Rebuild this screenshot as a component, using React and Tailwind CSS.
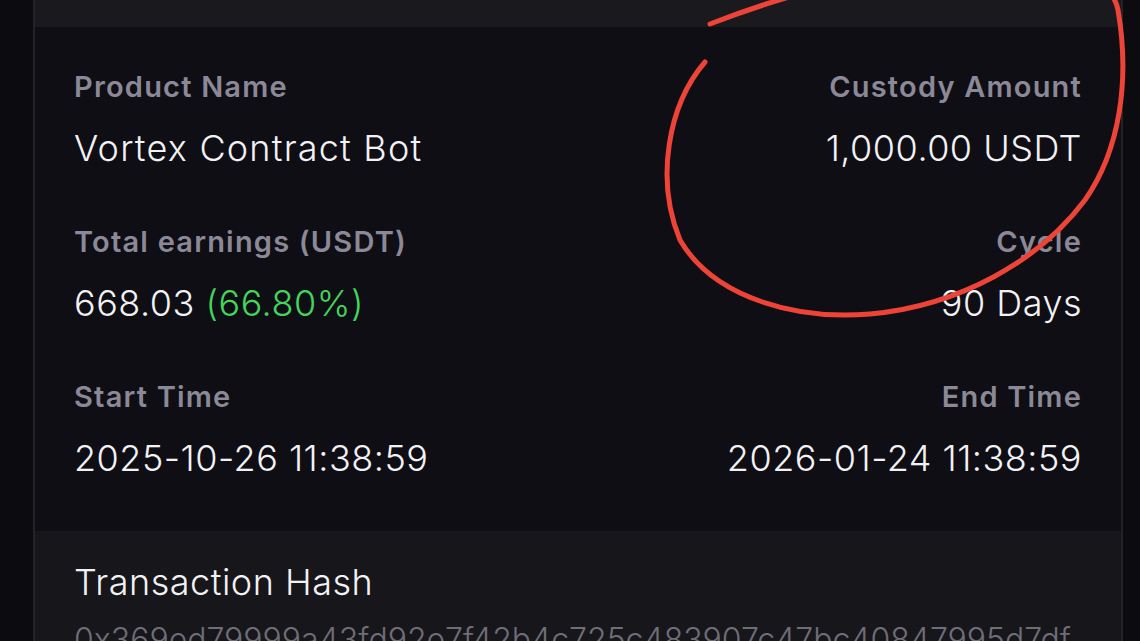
import React from "react";

const rows = [
  {
    l: "Product Name",
    lv: <span className="tracking-[1.2px]">Vortex Contract Bot</span>,
    r: "Custody Amount",
    rv: <span>1,000.00 USDT</span>,
  },
  {
    l: "Total earnings (USDT)",
    lv: (
      <span>
        668.03 <span className="text-[#43d65c]">(66.80%)</span>
      </span>
    ),
    r: "Cycle",
    rv: <span>90 Days</span>,
  },
  {
    l: "Start Time",
    lv: <span>2025-10-26 11:38:59</span>,
    r: "End Time",
    rv: <span>2026-01-24 11:38:59</span>,
  },
];

export default function App() {
  return (
    <div
      className="relative w-[1140px] h-[641px] overflow-hidden bg-[#0c0b10] flex"
      style={{ fontFamily: "Inter, 'Noto Sans', sans-serif" }}
    >
      <div className="w-[33px] shrink-0" />
      <div className="w-[1090px] shrink-0 flex flex-col border-x-2 border-[#232227]">
        <div className="h-[27px] bg-[#1a191d] shrink-0" />
        <div className="bg-[#0f0e14] px-[39px] pt-[43px] h-[504px] shrink-0 flex flex-col gap-[55px]">
          {rows.map((row, i) => (
            <div key={i} className="flex justify-between">
              <div className="flex flex-col gap-[22px]">
                <div className="text-[29px] leading-[34px] font-semibold text-[#8b8997] tracking-[1.2px]">
                  {row.l}
                </div>
                <div className="text-[36px] leading-[44px] font-light text-[#f2f2f4] tracking-[0.5px]">
                  {row.lv}
                </div>
              </div>
              <div className="flex flex-col gap-[22px] items-end">
                <div className="text-[29px] leading-[34px] font-semibold text-[#8b8997] tracking-[1.2px]">
                  {row.r}
                </div>
                <div className="text-[36px] leading-[44px] font-light text-[#f2f2f4] tracking-[0.5px]">
                  {row.rv}
                </div>
              </div>
            </div>
          ))}
        </div>
        <div className="flex-1 bg-[#17161b] px-[39px] pt-[29px]">
          <div className="text-[36px] leading-[44px] font-light text-[#f2f2f4] tracking-[0.5px]">
            Transaction Hash
          </div>
          <div className="mt-[17px] text-[32px] leading-[38px] font-light text-[#6f6d78] whitespace-nowrap">
            0x369ed79999a43fd92e7f42b4c725c483907c47bc40847995d7df
          </div>
        </div>
      </div>
      <svg
        className="absolute left-0 top-0 pointer-events-none"
        width="1140"
        height="641"
        viewBox="0 0 1140 641"
      >
        <path
          d="M705 62 C668 105 655 180 680 240 C715 300 800 320 870 314 C960 306 1040 260 1085 200 C1120 150 1130 80 1118 10 C1105 -60 900 -50 710 24"
          fill="none"
          stroke="#ee4437"
          strokeWidth="5"
          strokeLinecap="round"
        />
      </svg>
    </div>
  );
}
